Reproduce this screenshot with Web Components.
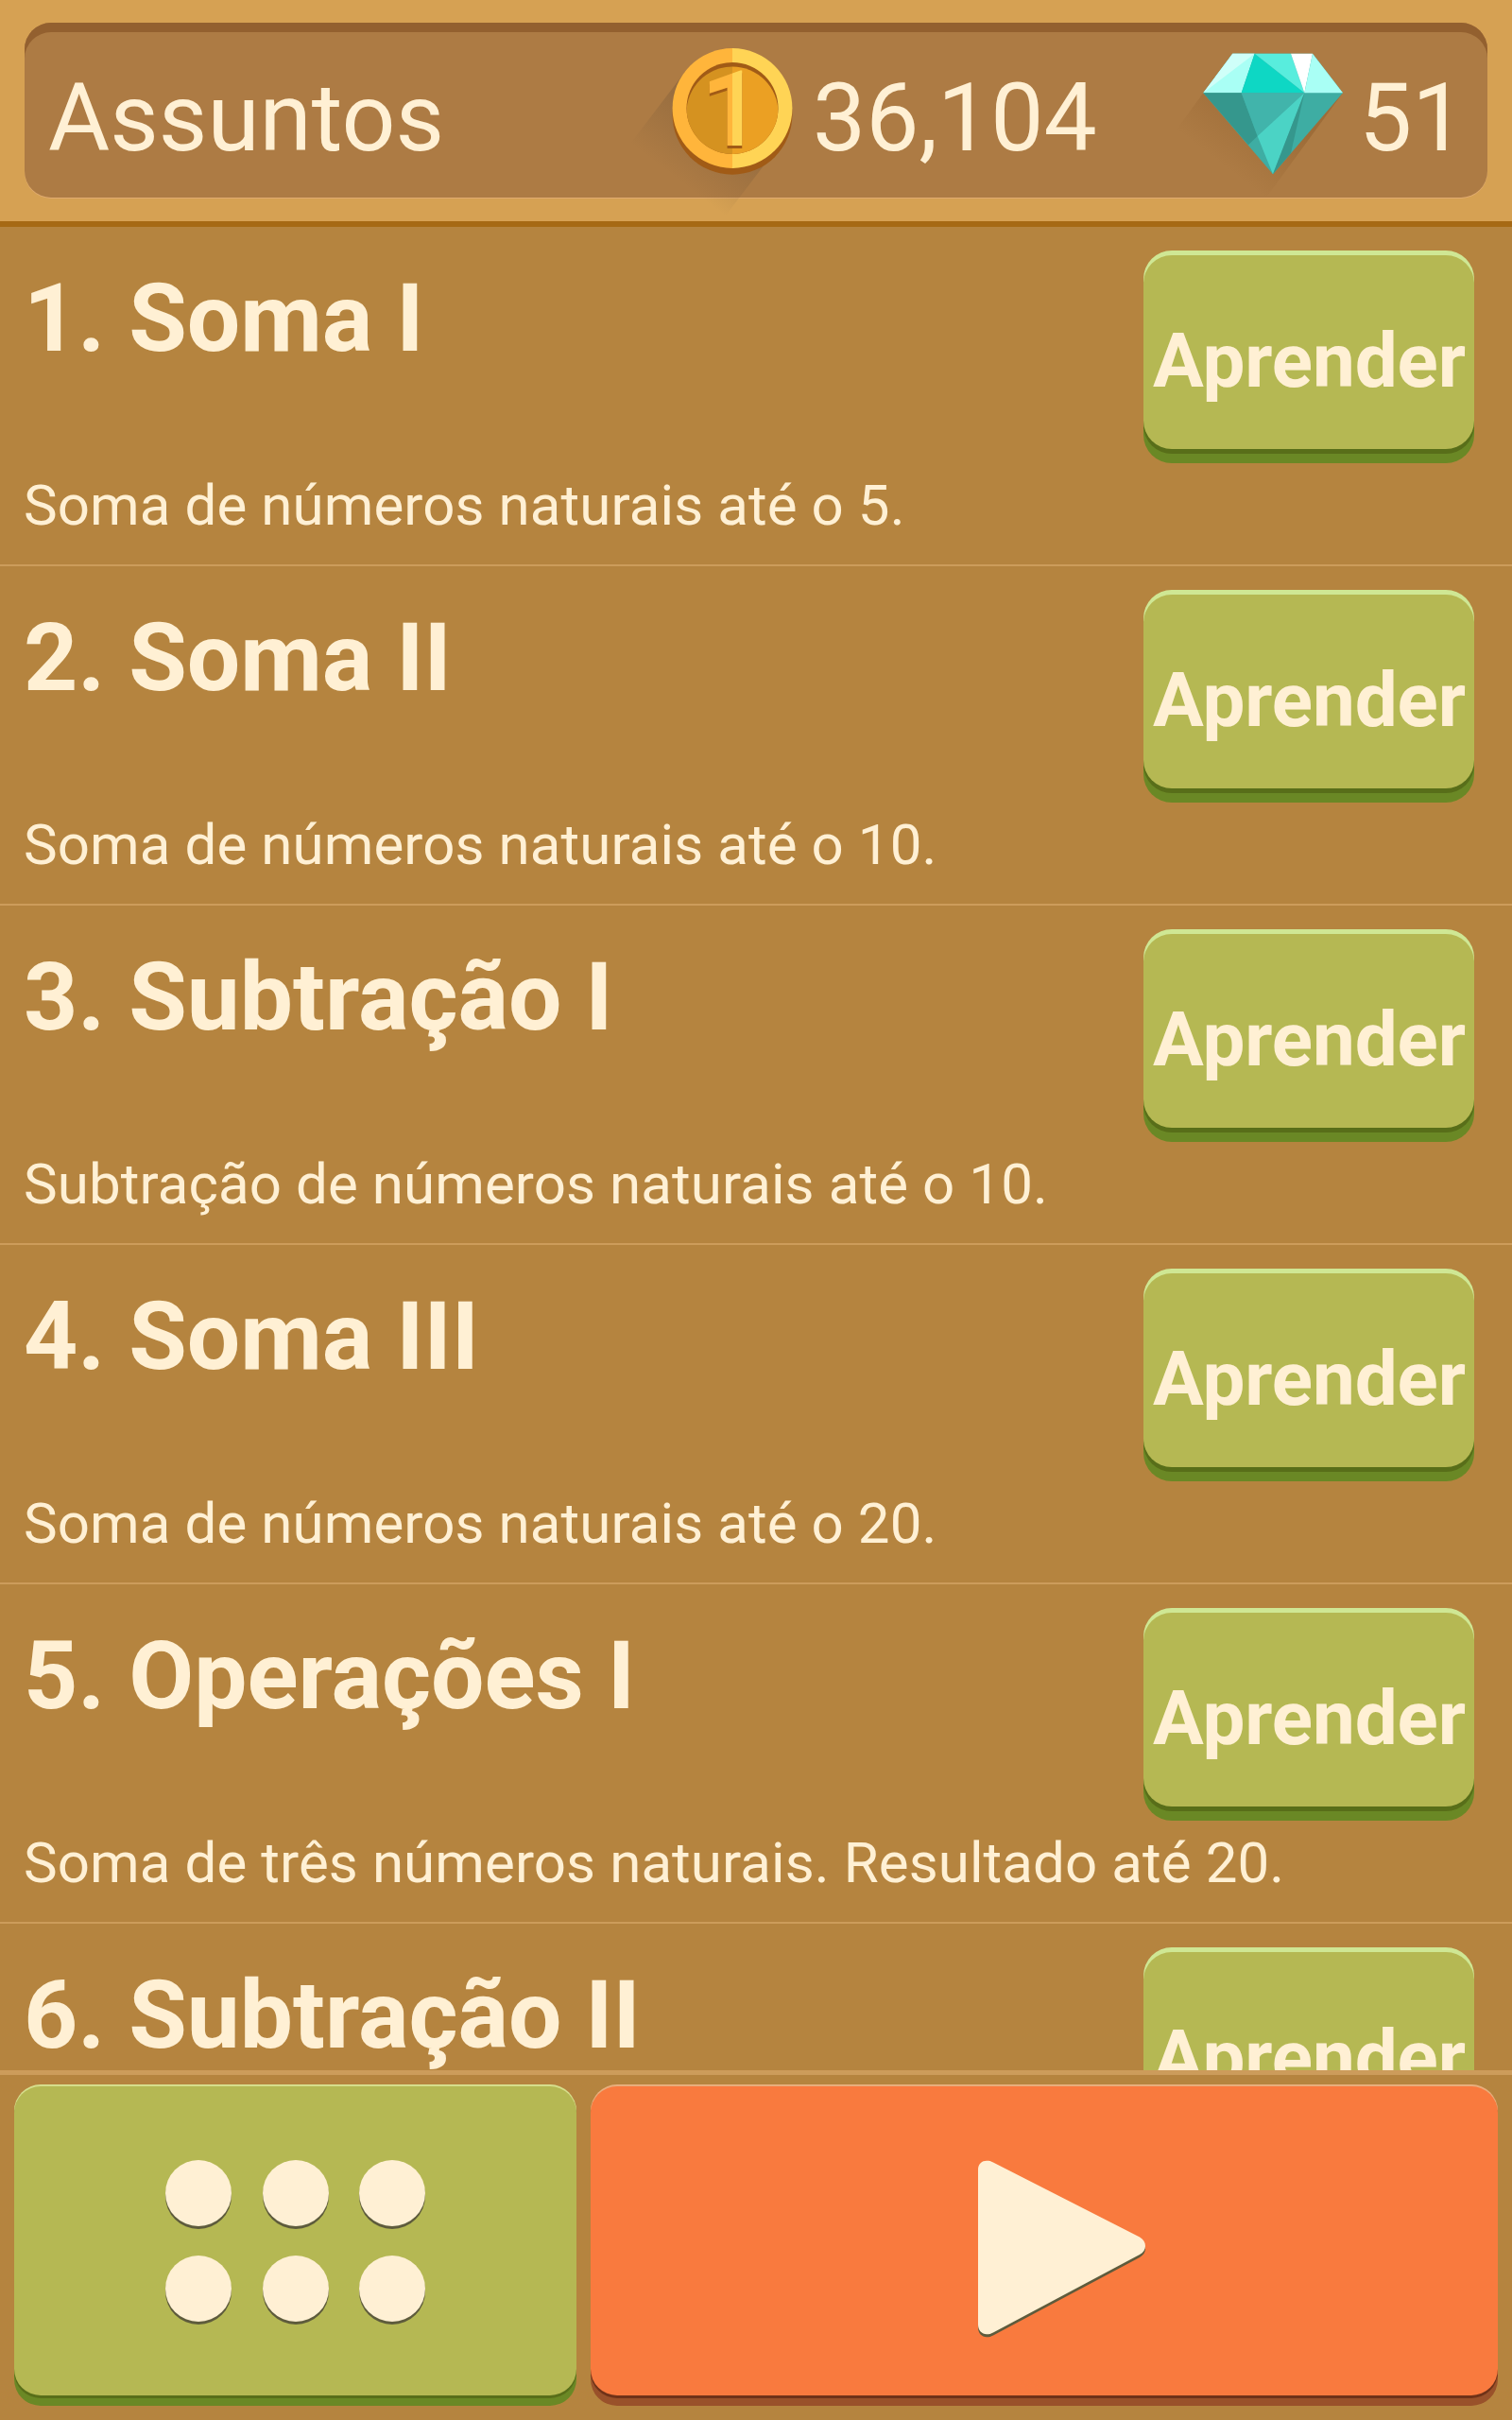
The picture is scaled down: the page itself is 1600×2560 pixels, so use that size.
<!DOCTYPE html>
<html lang="pt">
<head>
<meta charset="utf-8">
<title>Assuntos</title>
<style>
  html, body {
    margin: 0;
    padding: 0;
  }
  body {
    width: 1600px;
    height: 2560px;
    overflow: hidden;
    background-color: #b5843f;
    color: #fff0d4;
    font-family: Roboto, sans-serif;
  }
</style>
</head>
<body>
<math-app></math-app>
<script>
"use strict"

function attachTemplate(host, html) {
  const template = document.createElement('template');
  template.innerHTML = html;
  host.attachShadow({ mode: 'open' }).appendChild(template.content.cloneNode(true));
}

class CoinIcon extends HTMLElement {
  constructor() {
    super();
    attachTemplate(this, `
      <style>
      :host {
        display: block;
        width: 128px;
        height: 134px;
      }
      svg {
        display: block;
        overflow: visible;
      }
      text {
        font: bold 111px Roboto, sans-serif;
        filter: drop-shadow(0 3px 0 #a15b16);
      }
      </style>
      <svg width="128" height="134" viewBox="711 51 128 134">
        <defs>
          <linearGradient id="shade" gradientUnits="userSpaceOnUse" x1="775" y1="114.5" x2="717" y2="190">
            <stop offset="0" stop-color="#5a4632" stop-opacity=".32"/>
            <stop offset="1" stop-color="#5a4632" stop-opacity="0"/>
          </linearGradient>
          <linearGradient id="rim" gradientUnits="userSpaceOnUse" x1="711" y1="0" x2="839" y2="0">
            <stop offset=".5" stop-color="#ffb53b"/>
            <stop offset=".5" stop-color="#ffd455"/>
          </linearGradient>
          <linearGradient id="face" gradientUnits="userSpaceOnUse" x1="711" y1="0" x2="839" y2="0">
            <stop offset=".5" stop-color="#d59220"/>
            <stop offset=".5" stop-color="#eba023"/>
          </linearGradient>
          <clipPath id="hole"><circle cx="775" cy="114.5" r="48.5"/></clipPath>
        </defs>
        <path d="M724.7 76.2 L648 177 L748 254 L825.3 152.8 Z" fill="url(#shade)"/>
        <circle cx="775" cy="121.3" r="63.4" fill="#a15b16"/>
        <circle cx="775" cy="114.5" r="63.4" fill="url(#rim)"/>
        <circle cx="775" cy="114.5" r="48.5" fill="#a15b16"/>
        <circle cx="775" cy="119" r="48.5" fill="url(#face)" clip-path="url(#hole)"/>
        <text x="741.8" y="154.3" fill="url(#rim)">1</text>
      </svg>
    `);
  }
}

class GemIcon extends HTMLElement {
  constructor() {
    super();
    attachTemplate(this, `
      <style>
      :host {
        display: block;
        width: 148px;
        height: 134px;
      }
      svg {
        display: block;
        overflow: visible;
      }
      </style>
      <svg width="148" height="134" viewBox="1273 51 148 134">
        <defs>
          <linearGradient id="shade" gradientUnits="userSpaceOnUse" x1="1347" y1="114" x2="1298" y2="178">
            <stop offset="0" stop-color="#7a4a1c" stop-opacity=".3"/>
            <stop offset="1" stop-color="#7a4a1c" stop-opacity="0"/>
          </linearGradient>
        </defs>
        <path d="M1273.3 98.3 L1200 199 L1285 284 L1421 98.3 Z" fill="url(#shade)"/>
        <!-- facets share a third-of-a-pixel grid -->
        <g transform="translate(1240 20) scale(.33333)">
          <path d="M193 110H447L543 235L321 493L100 235Z" fill="#3eada3"/>
          <path d="M193 110H263L221 235H100Z" fill="#a9fff5"/>
          <path d="M193 110H263L100 235Z" fill="#cffff9"/>
          <path d="M263 110L421 235H221Z" fill="#0ed7c4"/>
          <path d="M263 110H378L421 235Z" fill="#58eddd"/>
          <path d="M378 110H447L421 235Z" fill="#fff"/>
          <path d="M447 110L543 235H421Z" fill="#a9fff5"/>
          <path d="M100 235H221L272 372L243 400Z" fill="#35978d"/>
          <path d="M221 235H421L272 372Z" fill="#41b4ab"/>
          <path d="M272 372L421 235L321 493Z" fill="#4bd3c5"/>
          <path d="M421 235L378 426L321 493Z" fill="#35978d"/>
        </g>
      </svg>
    `);
  }
}

class TopBar extends HTMLElement {
  constructor() {
    super();
    attachTemplate(this, `
      <style>
      :host {
        display: block;
        box-sizing: border-box;
        height: 240px;
        padding: 24px 26px 0;
        background-color: #d6a153;
        border-bottom: 6px solid #a66914;
      }
      .panel {
        display: grid;
        grid-template-columns: 685px 562px auto;
        align-items: start;
        height: 185px;
        border-radius: 28px;
        background-color: #ad7b44;
        box-shadow: inset 0 10px 0 #93602f, 0 1px 0 #e0ab70;
        font-size: 100px;
        line-height: 117px;
      }
      .title {
        padding: 42px 0 0 25px;
      }
      .stat {
        display: flex;
        padding-top: 27px;
      }
      .value {
        padding: 15px 0 0 21px;
      }
      .gems .value {
        padding-left: 17px;
      }
      </style>
      <div class="panel">
        <div class="title"><slot></slot></div>
        <div class="stat"><coin-icon></coin-icon><div class="value"><slot name="coins"></slot></div></div>
        <div class="stat gems"><gem-icon></gem-icon><div class="value"><slot name="gems"></slot></div></div>
      </div>
    `);
  }
}

class LearnButton extends HTMLElement {
  constructor() {
    super();
    attachTemplate(this, `
      <style>
      :host {
        display: block;
        box-sizing: border-box;
        width: 350px;
        height: 225px;
        padding: 5px 0 15px;
        border-radius: 30px;
        background: linear-gradient(#cfe794 50%, #6a8825 50%);
      }
      .face {
        box-sizing: border-box;
        height: 205px;
        padding: 65px 0 0 1px;
        border-radius: 30px;
        background-color: #b5b853;
        box-shadow: 0 5px 0 #586e19;
        font-size: 80px;
        font-weight: bold;
        line-height: 94px;
        letter-spacing: -.1px;
        text-align: center;
        white-space: nowrap;
      }
      </style>
      <div class="face"><slot></slot></div>
    `);
  }
}

class SubjectRow extends HTMLElement {
  constructor() {
    super();
    attachTemplate(this, `
      <style>
      :host {
        display: block;
        flex: none;
        box-sizing: border-box;
        height: 359px;
        padding: 25px 40px 0 25px;
        border-bottom: 2px solid #cc9c5b;
      }
      .top {
        display: flex;
        justify-content: space-between;
        height: 235px;
      }
      .name {
        padding-top: 13px;
        font-size: 100px;
        font-weight: bold;
        line-height: 117px;
      }
      .about {
        font-size: 60px;
        line-height: 70px;
        letter-spacing: .1px;
      }
      </style>
      <div class="top">
        <div class="name"><slot name="name"></slot></div>
        <learn-button>Aprender</learn-button>
      </div>
      <div class="about"><slot></slot></div>
    `);
  }
}

class BottomButton extends HTMLElement {
  constructor() {
    super();
    attachTemplate(this, `
      <style>
      :host {
        display: block;
        box-sizing: border-box;
        height: 340px;
        padding: 2px 0 11px;
        border-radius: 28px;
        background: linear-gradient(var(--light) 50%, var(--edge) 50%);
      }
      .face {
        display: flex;
        justify-content: center;
        box-sizing: border-box;
        height: 327px;
        padding-top: 78px;
        border-radius: 28px;
        background-color: var(--face);
        box-shadow: 0 3px 0 var(--dark);
      }
      </style>
      <div class="face"><slot></slot></div>
    `);
  }
}

class DotsIcon extends HTMLElement {
  constructor() {
    super();
    attachTemplate(this, `
      <style>
      :host {
        display: grid;
        grid-template-columns: repeat(3, 70px);
        grid-auto-rows: 70px;
        gap: 30.5px 32.4px;
      }
      i {
        border-radius: 50%;
        background-color: #fff0d4;
        box-shadow: 0 3px 0 #5e5b3c;
      }
      </style>
      <i></i><i></i><i></i><i></i><i></i><i></i>
    `);
  }
}

class PlayIcon extends HTMLElement {
  constructor() {
    super();
    attachTemplate(this, `
      <style>
      :host {
        display: block;
        width: 180px;
        height: 190px;
      }
      svg {
        display: block;
      }
      </style>
      <svg width="180" height="190" viewBox="0 0 180 190">
        <defs>
          <path id="triangle" d="M0 10.5 C0 4 4 .8 9 .8 C12 .8 13.5 1.2 16 2.5 L171 81.5 C179 86.5 179 95.5 171 100 L16 182.5 C13.5 183.8 12 184.3 9 184.3 C4 184.3 0 180 0 174 Z"/>
        </defs>
        <use href="#triangle" y="3" fill="#5e5b3c"/>
        <use href="#triangle" fill="#fff0d4"/>
      </svg>
    `);
  }
}

class BottomBar extends HTMLElement {
  constructor() {
    super();
    attachTemplate(this, `
      <style>
      :host {
        display: grid;
        grid-template-columns: 595px 960px;
        gap: 15px;
        box-sizing: border-box;
        height: 370px;
        padding: 10px 15px 0;
        border-top: 5px solid #cc9c5b;
      }
      .menu {
        --light: #d6de8c;
        --face: #b5b853;
        --dark: #586e19;
        --edge: #6a8825;
      }
      .play {
        --light: #e8ae7c;
        --face: #f97a3e;
        --dark: #6f3218;
        --edge: #99512a;
      }
      play-icon {
        padding-left: 39px;
      }
      </style>
      <bottom-button class="menu"><dots-icon></dots-icon></bottom-button>
      <bottom-button class="play"><play-icon></play-icon></bottom-button>
    `);
  }
}

class MathApp extends HTMLElement {
  constructor() {
    super();
    const subjects = [
      ['1. Soma I', 'Soma de números naturais até o 5.'],
      ['2. Soma II', 'Soma de números naturais até o 10.'],
      ['3. Subtração I', 'Subtração de números naturais até o 10.'],
      ['4. Soma III', 'Soma de números naturais até o 20.'],
      ['5. Operações I', 'Soma de três números naturais. Resultado até 20.'],
      ['6. Subtração II', '']
    ];
    const rows = subjects.map(([name, about]) =>
      `<subject-row><span slot="name">${name}</span>${about}</subject-row>`).join('');
    attachTemplate(this, `
      <style>
      :host {
        display: flex;
        flex-direction: column;
        height: 2560px;
      }
      top-bar, bottom-bar {
        flex: none;
      }
      main {
        display: flex;
        flex-direction: column;
        flex: 1;
        min-height: 0;
        overflow: hidden;
      }
      </style>
      <top-bar>Assuntos<span slot="coins">36,104</span><span slot="gems">51</span></top-bar>
      <main>${rows}</main>
      <bottom-bar></bottom-bar>
    `);
  }
}

customElements.define('coin-icon', CoinIcon);
customElements.define('gem-icon', GemIcon);
customElements.define('top-bar', TopBar);
customElements.define('learn-button', LearnButton);
customElements.define('subject-row', SubjectRow);
customElements.define('dots-icon', DotsIcon);
customElements.define('play-icon', PlayIcon);
customElements.define('bottom-button', BottomButton);
customElements.define('bottom-bar', BottomBar);
customElements.define('math-app', MathApp);
</script>
</body>
</html>
